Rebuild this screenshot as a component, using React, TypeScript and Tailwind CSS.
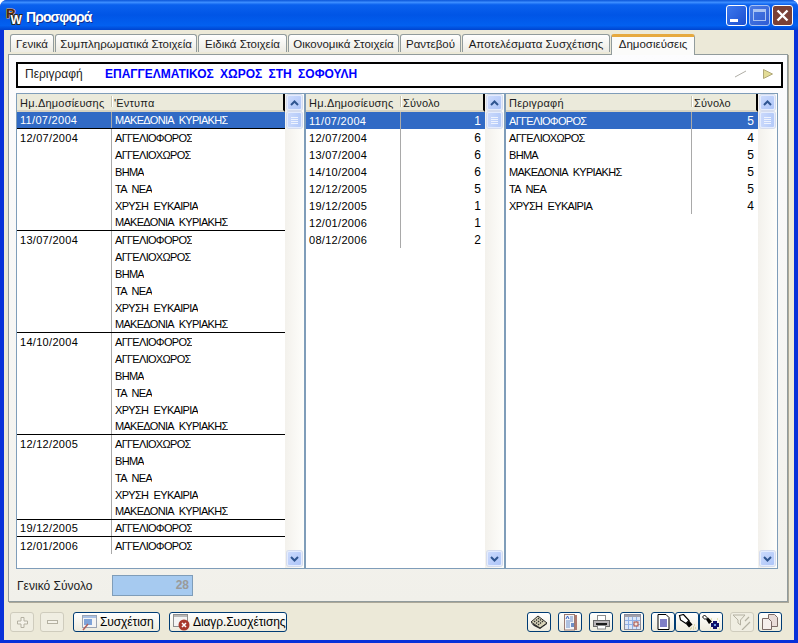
import type { ReactNode } from 'react'

const allPapers = ['ΑΓΓΕΛΙΟΦΟΡΟΣ', 'ΑΓΓΕΛΙΟΧΩΡΟΣ', 'ΒΗΜΑ', 'ΤΑ ΝΕΑ', 'ΧΡΥΣΗ ΕΥΚΑΙΡΙΑ', 'ΜΑΚΕΔΟΝΙΑ ΚΥΡΙΑΚΗΣ']

const groups = [
  { date: '11/07/2004', papers: ['ΜΑΚΕΔΟΝΙΑ ΚΥΡΙΑΚΗΣ'] },
  { date: '12/07/2004', papers: allPapers },
  { date: '13/07/2004', papers: allPapers },
  { date: '14/10/2004', papers: allPapers },
  { date: '12/12/2005', papers: allPapers.slice(1) },
  { date: '19/12/2005', papers: ['ΑΓΓΕΛΙΟΦΟΡΟΣ'] },
  { date: '12/01/2006', papers: ['ΑΓΓΕΛΙΟΦΟΡΟΣ'] },
]

const dateTotals = [
  ['11/07/2004', 1],
  ['12/07/2004', 6],
  ['13/07/2004', 6],
  ['14/10/2004', 6],
  ['12/12/2005', 5],
  ['19/12/2005', 1],
  ['12/01/2006', 1],
  ['08/12/2006', 2],
] as const

const paperTotals = [
  ['ΑΓΓΕΛΙΟΦΟΡΟΣ', 5],
  ['ΑΓΓΕΛΙΟΧΩΡΟΣ', 4],
  ['ΒΗΜΑ', 5],
  ['ΜΑΚΕΔΟΝΙΑ ΚΥΡΙΑΚΗΣ', 5],
  ['ΤΑ ΝΕΑ', 5],
  ['ΧΡΥΣΗ ΕΥΚΑΙΡΙΑ', 4],
] as const

const tabs = [
  { label: 'Γενικά', w: 'w-[44px]' },
  { label: 'Συμπληρωματικά Στοιχεία', w: 'w-[142px]' },
  { label: 'Ειδικά Στοιχεία', w: 'w-[89px]' },
  { label: 'Οικονομικά Στοιχεία', w: 'w-[111px]' },
  { label: 'Ραντεβού', w: 'w-[61px]' },
  { label: 'Αποτελέσματα Συσχέτισης', w: 'w-[148px]' },
]

function ScrollButton({ down }: { down?: boolean }) {
  return (
    <div className="flex h-[15px] w-[15px] shrink-0 items-center justify-center rounded-[2px] border border-[#e4ecfe] bg-gradient-to-br from-[#cbdafc] to-[#aec5f8] shadow-[0_0_0_1px_#d5dcee]">
      <svg width="9" height="6" viewBox="0 0 9 6">
        <path d={down ? 'M1 1l3.5 3.5L8 1' : 'M1 5l3.5-3.5L8 5'} fill="none" stroke="#2f5590" strokeWidth="2" />
      </svg>
    </div>
  )
}

function Scrollbar() {
  return (
    <div className="flex w-[19px] shrink-0 flex-col bg-gradient-to-r from-[#f3f1ec] to-[#fefefb] pb-[2px] pl-[2px] pt-[1px]">
      <ScrollButton />
      <div className="mt-[2px] flex h-[16px] w-[15px] shrink-0 flex-col items-center justify-center gap-[1px] rounded-[2px] border border-[#e4ecfe] bg-gradient-to-r from-[#c9d8fb] to-[#b4caf9] shadow-[0_0_0_1px_#d5dcee]">
        <span className="h-[1px] w-[7px] bg-[#eef3fe]" />
        <span className="h-[1px] w-[7px] bg-[#eef3fe]" />
        <span className="h-[1px] w-[7px] bg-[#eef3fe]" />
        <span className="h-[1px] w-[7px] bg-[#eef3fe]" />
      </div>
      <div className="flex-1" />
      <ScrollButton down />
    </div>
  )
}

function Header({ first, second, firstW }: { first: string; second: string; firstW: string }) {
  return (
    <div className="flex h-[18px] border-r-2 border-b-2 border-r-black border-b-[#d6d2c2] bg-[#ebeadb] pb-[1px] text-[11px] leading-[18px] tracking-[0.2px] text-[#1c1c1c]">
      <div className={`${firstW} shrink-0 truncate pl-[3px]`}>{first}</div>
      <div className="my-[2px] w-[2px] shrink-0 border-x border-x-[#c7c5b2] border-r-white" />
      <div className="truncate pl-[1px]">{second}</div>
    </div>
  )
}

function Grid({ w, children }: { w: string; children: ReactNode }) {
  return (
    <div className={`${w} flex shrink-0 border border-[#7f9db9] bg-white`}>
      <div className="flex min-w-0 flex-1 flex-col">{children}</div>
      <Scrollbar />
    </div>
  )
}

function PublicationGrid() {
  return (
    <Grid w="w-[289px]">
      <Header first="Ημ.Δημοσίευσης" second="'Εντυπα" firstW="w-[94px]" />
      {groups.map((g, gi) => (
        <div key={g.date} className="border-b border-b-black last:border-b-0">
          {g.papers.map((p, i) => {
            const selected = gi === 0
            return (
              <div
                key={p}
                className={`flex text-[11px] ${i === g.papers.length - 1 && gi !== groups.length - 1 ? 'h-[16px] leading-[17px]' : 'h-[17px] leading-[18px]'} ${selected ? 'bg-[#316ac5] text-white' : 'text-black'}`}
              >
                <div className="w-[95px] shrink-0 border-r border-r-[#a9a9a9] pl-[3px] tracking-[0.3px]">{i === 0 ? g.date : ''}</div>
                <div className="truncate pl-[3px] tracking-[-0.7px] [word-spacing:3px]">{p}</div>
              </div>
            )
          })}
        </div>
      ))}
    </Grid>
  )
}

function TotalsGrid({
  w,
  firstTitle,
  firstW,
  nameClass,
  rows,
}: {
  w: string
  firstTitle: string
  firstW: string
  nameClass: string
  rows: readonly (readonly [string, number])[]
}) {
  return (
    <Grid w={w}>
      <Header first={firstTitle} second="Σύνολο" firstW={firstW} />
      {rows.map(([name, total], i) => (
        <div key={name} className={`flex h-[17px] text-[11px] leading-[18px] ${i === 0 ? 'bg-[#316ac5] text-white' : 'text-black'}`}>
          <div className={`${firstW} ${nameClass} ml-[1px] shrink-0 border-r border-r-[#a9a9a9] pl-[2px]`}>{name}</div>
          <div className="flex-1 pr-[4px] text-right text-[12px]">{total}</div>
        </div>
      ))}
    </Grid>
  )
}

function TitleButton({ tone, children }: { tone: string; children: ReactNode }) {
  return (
    <div className={`flex h-[21px] w-[21px] items-center justify-center rounded-[3px] border ${tone}`}>{children}</div>
  )
}

function ToolButton({ disabled, w = 'w-[24px]', children }: { disabled?: boolean; w?: string; children: ReactNode }) {
  return (
    <div
      className={`${w} flex h-[20px] shrink-0 items-center justify-center rounded-[3px] border ${disabled ? 'border-[#cfccbd] bg-[#f0eee2]' : 'border-[#003c74] bg-gradient-to-b from-white to-[#eeebdd]'}`}
    >
      {children}
    </div>
  )
}

function TextButton({ w, icon, label }: { w: string; icon: ReactNode; label: string }) {
  return (
    <div className={`${w} flex h-[20px] shrink-0 items-center gap-[1px] rounded-[3px] border border-[#003c74] bg-gradient-to-b from-white to-[#eeebdd] pl-[3px] text-[12px] leading-[17px] tracking-[-0.1px] text-black`}>
      {icon}
      <span className="whitespace-nowrap">{label}</span>
    </div>
  )
}

const windowIcon = (
  <svg width="22" height="17" viewBox="0 0 22 17" className="shrink-0">
    <rect x="5.5" y="1.5" width="14" height="12" fill="#f4f4f4" stroke="#9aa4b4" />
    <rect x="6" y="2" width="13" height="2" fill="#a8c0e4" />
    <rect x="7" y="5" width="8" height="6" fill="#7fa3d8" />
    <path d="M6 16l5-6" stroke="#b0605a" strokeWidth="1.5" />
  </svg>
)

const deleteIcon = (
  <svg width="19" height="17" viewBox="0 0 19 17" className="shrink-0">
    <rect x="0.5" y="0.5" width="14" height="12" fill="#f4f4f4" stroke="#8d8d8d" />
    <rect x="1" y="1" width="13" height="2" fill="#b8b8b8" />
    <circle cx="11" cy="11" r="5.5" fill="#a8392c" />
    <path d="M9 9l4 4M13 9l-4 4" stroke="#fff" strokeWidth="1.5" />
  </svg>
)

const ledgerIcon = (
  <svg width="18" height="15" viewBox="0 0 18 15">
    <path d="M1 8l3 3 6 3 7-5v-1l-7 4z" fill="#2a2a2a" />
    <path d="M1 7l7-6 9 7-7 5z" fill="#d9d4b8" stroke="#2a2a2a" />
    <path d="M4 7l5-4M6 8.5l5-4M8 10l5-4" stroke="#333" strokeWidth="1.3" strokeDasharray="1.5 1" />
  </svg>
)

const reportIcon = (
  <svg width="15" height="17" viewBox="0 0 15 17">
    <rect x="11" y="1" width="3" height="15" fill="#b07a70" />
    <rect x="1.5" y="0.5" width="10" height="15.5" fill="#f3f4f8" stroke="#9a7a72" />
    <path d="M3 5l1.5-3 1.5 3" fill="none" stroke="#2f5fc0" />
    <path d="M7 3h3M7 5h3M3 7h7M3 9h4M3 11h4M3 13h4" stroke="#6d8fc8" />
    <rect x="8" y="9" width="3" height="4" fill="#6d8fc8" />
  </svg>
)

const printerIcon = (
  <svg width="17" height="15" viewBox="0 0 17 15">
    <rect x="4.5" y="0.5" width="8" height="5" fill="#fff" stroke="#8c8c8c" />
    <rect x="0.5" y="5.5" width="16" height="6" fill="#b9b5b8" stroke="#6a6a6a" />
    <rect x="3" y="8" width="11" height="2" fill="#1c1c1c" />
    <rect x="4.5" y="10.5" width="8" height="3.5" fill="#fff" stroke="#8c8c8c" />
  </svg>
)

const calendarIcon = (
  <svg width="17" height="16" viewBox="0 0 17 16">
    <rect x="0.5" y="0.5" width="16" height="15" fill="#dbe6f8" stroke="#8e8e9c" />
    <rect x="1" y="1" width="15" height="2" fill="#a0a0ac" />
    <path d="M4.5 3v12M8.5 3v12M12.5 3v12M1 6.5h15M1 10.5h15" stroke="#8fb0e6" />
    <rect x="10" y="8" width="4" height="4" fill="#f1e6df" stroke="#a8493f" />
  </svg>
)

const pageIcon = (
  <svg width="13" height="16" viewBox="0 0 13 16">
    <path d="M1 .5h8l3 3v12H1z" fill="#fff" stroke="#000" />
    <path d="M3 6h7M3 8h7M3 10h7M3 12h7" stroke="#000090" strokeWidth="1.2" />
  </svg>
)

const torchIcon = (
  <svg width="18" height="16" viewBox="0 0 18 16">
    <path d="M1.5 1.5l4-1 5.5 6-3 3-5.5-3.5z" fill="#fff" stroke="#000" strokeWidth="1.2" />
    <path d="M8 10l3.2-3.2 3.3 3.7-3.5 3z" fill="#000" />
    <path d="M13 14h1M15 13h1M16 11h1M15 15h1M17 14h1M12 15h1" stroke="#c9c47a" />
  </svg>
)

const torchPlusIcon = (
  <svg width="20" height="17" viewBox="0 0 20 17">
    <path d="M1.5 3l2-2 2.5 2.5-2 2z" fill="#fff" stroke="#000" />
    <path d="M5 5.5l2-2 4 4-3 2.5z" fill="#000" />
    <path d="M12 7h4v2h2v4h-2v2h-4v-2h-2V9h2z" fill="#10106a" />
    <path d="M13 10h2v2h-2z" fill="#6aa0e8" />
    <path d="M16 5h1M18 7h1M9 14h1M18 15h1M10 5h1" stroke="#d4cf72" />
  </svg>
)

const filterIcon = (
  <svg width="20" height="16" viewBox="0 0 20 16">
    <path d="M1 1h12L8.5 6v5L6 9V6z" fill="none" stroke="#b4b1a2" />
    <path d="M17 3l-4 4M18 8l-8 8" stroke="#b4b1a2" strokeWidth="1.2" />
  </svg>
)

const copyIcon = (
  <svg width="16" height="16" viewBox="0 0 16 16">
    <path d="M6.5 .5h6l3 3v9h-9z" fill="#e9dcd8" stroke="#7b6a66" />
    <path d="M.5 4.5h6l3 3v8h-9z" fill="#f6efec" stroke="#7b6a66" />
  </svg>
)

export default function App() {
  return (
    <div className="flex h-[643px] w-[798px] flex-col overflow-hidden rounded-t-[7px] bg-[#0831d9] font-['Liberation_Sans',sans-serif]">
      <div className="flex h-[30px] shrink-0 items-center bg-[linear-gradient(to_bottom,#0a55d8_0%,#3c8dff_8%,#0a61ee_16%,#0055e6_50%,#0260f0_85%,#0044cf_100%)] pl-[5px] pr-[5px]">
        <svg width="20" height="20" viewBox="0 0 20 20" className="mt-[3px] shrink-0">
          <text x="1" y="11" fontSize="13" fontWeight="700" fontFamily="Liberation Sans, sans-serif" fill="#4a2410" stroke="#e8b46c" strokeWidth="1.2" paintOrder="stroke">R</text>
          <text x="5.5" y="17" fontSize="12" fontWeight="700" fontFamily="Liberation Sans, sans-serif" fill="#fff" stroke="#2a2a24" strokeWidth="1.8" paintOrder="stroke">W</text>
        </svg>
        <span className="ml-[1px] mt-[4px] text-[14px] font-bold tracking-[-0.9px] text-white [text-shadow:1px_1px_0_#0f2f90]">Προσφορά</span>
        <div className="ml-auto flex gap-[2px]">
          <TitleButton tone="border-white bg-gradient-to-br from-[#3c78ee] to-[#1c4fd0]">
            <span className="mt-[11px] mr-[5px] h-[3px] w-[8px] bg-white" />
          </TitleButton>
          <TitleButton tone="border-[#a9c2f2] bg-gradient-to-br from-[#4a7be4] to-[#2f5cd4]">
            <span className="h-[12px] w-[13px] border border-t-[3px] border-[#a9c2f2]" />
          </TitleButton>
          <TitleButton tone="border-white bg-[#7a4136]">
            <svg width="13" height="13" viewBox="0 0 13 13">
              <path d="M1.5 1.5l10 10M11.5 1.5l-10 10" stroke="#fff" strokeWidth="2.4" />
            </svg>
          </TitleButton>
        </div>
      </div>

      <div className="mx-[4px] mb-[3px] flex min-h-0 flex-1 flex-col bg-[#ece9d8]">
        <div className="relative z-10 flex h-[24px] shrink-0 items-end pl-[6px]">
          <div className="flex gap-[1px]">
            {tabs.map((t) => (
              <div key={t.label} className={`${t.w} h-[18px] shrink-0 whitespace-nowrap rounded-t-[3px] border border-b-0 border-[#919b9c] bg-gradient-to-b from-white to-[#ecebe3] text-center text-[11.5px] leading-[18px] text-[#1c1c1c]`}>
                {t.label}
              </div>
            ))}
            <div className="-mb-[1px] h-[21px] w-[84px] shrink-0 rounded-t-[3px] border border-t-[3px] border-b-0 border-[#919b9c] border-t-[#e6a93f] bg-[#fbfbfa] text-center text-[11.5px] leading-[15px] text-[#1c1c1c]">
              Δημοσιεύσεις
            </div>
          </div>
        </div>

        <div className="ml-[4px] flex h-[548px] w-[780px] shrink-0 flex-col border border-[#919b9c] bg-gradient-to-b from-[#fcfcfe] to-[#f1f0ea] pl-[7px] pt-[7px] shadow-[1px_1px_0_#aca899]">
          <div className="flex h-[26px] w-[767px] shrink-0 items-center border-2 border-black bg-white pb-[3px] pl-[7px] text-[12px] text-[#1c1c1c]">
            <span className="w-[80px] shrink-0">Περιγραφή</span>
            <span className="text-[12px] font-bold text-[#0000ff] [word-spacing:3px]">ΕΠΑΓΓΕΛΜΑΤΙΚΟΣ ΧΩΡΟΣ ΣΤΗ ΣΟΦΟΥΛΗ</span>
            <svg width="13" height="8" viewBox="0 0 13 8" className="ml-auto mr-[16px]">
              <path d="M1 7L12 1" stroke="#b0aea6" />
            </svg>
            <svg width="10" height="10" viewBox="0 0 10 10" className="mr-[8px]">
              <path d="M.5 .5L9.5 5 .5 9.5z" fill="#e3dc96" stroke="#b0a878" />
            </svg>
          </div>

          <div className="mt-[5px] flex h-[476px] shrink-0 [&>div]:h-full">
            <PublicationGrid />
            <TotalsGrid w="w-[200px]" firstTitle="Ημ.Δημοσίευσης" firstW="w-[94px]" nameClass="tracking-[0.3px]" rows={dateTotals} />
            <TotalsGrid w="w-[273px]" firstTitle="Περιγραφή" firstW="w-[185px]" nameClass="tracking-[-0.7px] [word-spacing:3px]" rows={paperTotals} />
          </div>

          <div className="mt-[6px] flex items-center pl-[1px] text-[12px] text-[#1c1c1c]">
            <span className="w-[95px] shrink-0">Γενικό Σύνολο</span>
            <div className="h-[21px] w-[81px] border border-[#7f9db9] bg-[#a6caf0] pr-[3px] text-right text-[12px] font-bold leading-[19px] text-[#9a9a9a]">28</div>
          </div>
        </div>

        <div className="flex flex-1 items-start pl-[6px] pt-[10px]">
          <ToolButton disabled>
            <svg width="11" height="11" viewBox="0 0 11 11">
              <path d="M4 .5h3v3.5h3.5v3H7v3.5H4V7H.5V4H4z" fill="#f5f3ea" stroke="#b4b1a2" />
            </svg>
          </ToolButton>
          <div className="ml-[6px]">
            <ToolButton disabled>
              <span className="h-[4px] w-[11px] border border-[#b4b1a2] bg-[#f5f3ea]" />
            </ToolButton>
          </div>
          <div className="ml-[9px]">
            <TextButton w="w-[87px]" icon={windowIcon} label="Συσχέτιση" />
          </div>
          <div className="ml-[9px]">
            <TextButton w="w-[118px]" icon={deleteIcon} label="Διαγρ.Συσχέτισης" />
          </div>
          <div className="ml-[240px] flex gap-[7px]">
            <ToolButton>{ledgerIcon}</ToolButton>
            <ToolButton>{reportIcon}</ToolButton>
            <ToolButton>{printerIcon}</ToolButton>
            <ToolButton>{calendarIcon}</ToolButton>
            <div className="flex">
              <ToolButton>{pageIcon}</ToolButton>
              <ToolButton>{torchIcon}</ToolButton>
              <ToolButton>{torchPlusIcon}</ToolButton>
            </div>
            <ToolButton disabled>{filterIcon}</ToolButton>
            <div className="-ml-[3px]">
              <ToolButton>{copyIcon}</ToolButton>
            </div>
          </div>
        </div>
      </div>
    </div>
  )
}
